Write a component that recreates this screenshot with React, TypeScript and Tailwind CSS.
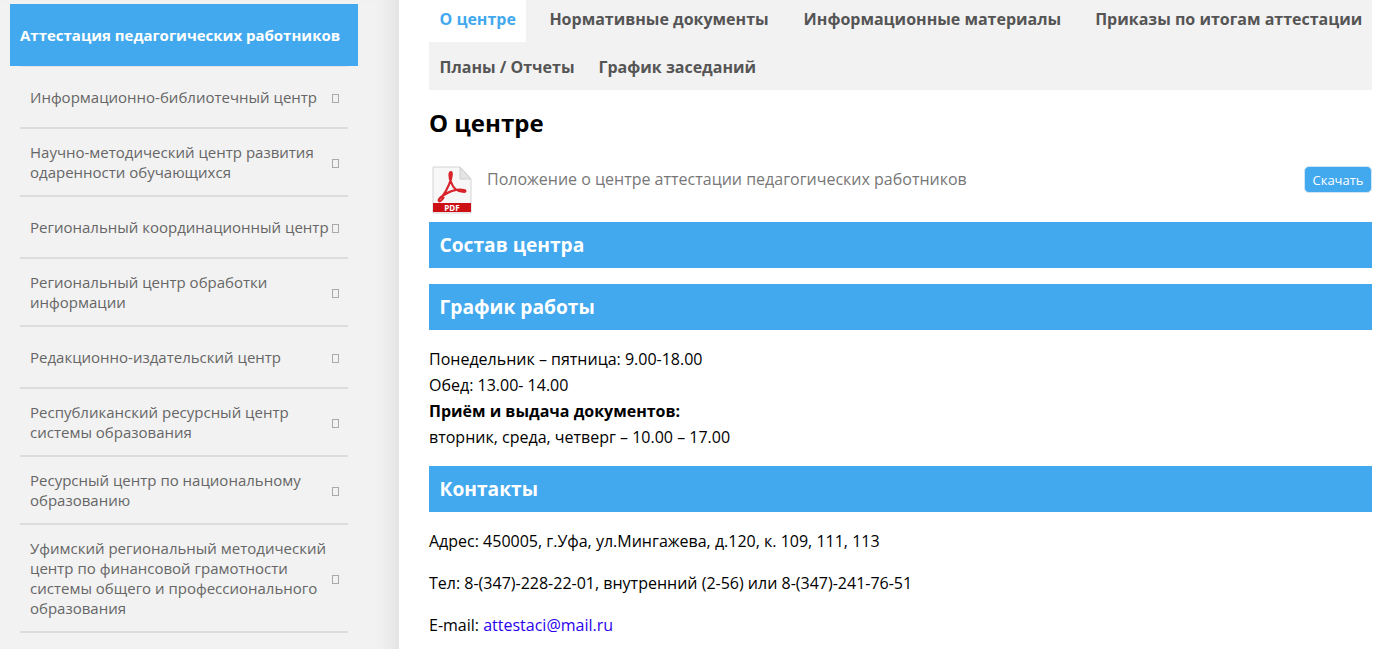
const font = { fontFamily: '"Open Sans", sans-serif' };

const sideItems = [
  "Информационно-библиотечный центр",
  "Научно-методический центр развития одаренности обучающихся",
  "Региональный координационный центр",
  "Региональный центр обработки информации",
  "Редакционно-издательский центр",
  "Республиканский ресурсный центр системы образования",
  "Ресурсный центр по национальному образованию",
  "Уфимский региональный методический центр по финансовой грамотности системы общего и профессионального образования",
];

const PdfIcon = () => (
  <svg width="42" height="50" viewBox="0 0 42 50">
    <path d="M2 1 H29 L40 13 V47 H2 Z" fill="#f7f7f7" stroke="#d4d4d4" strokeWidth="1" />
    <path d="M29 1 V13 H40 Z" fill="#e4e4e4" stroke="#cfcfcf" strokeWidth="1" />
    <path
      d="M8 33 C13 30 18 20 20 13 C21 9 21 6 20 6 C18 6 18 11 20 16 C22 22 26 26 33 26 C35 26 35 24 33 24 C27 23 19 25 13 29 C9 31 7 34 8 35 C9 36 11 34 13 31"
      fill="none"
      stroke="#d8232a"
      strokeWidth="2.2"
    />
    <rect x="2" y="37" width="38" height="9" fill="#cc1016" />
    <text x="21" y="44.5" textAnchor="middle" fontSize="8" fontWeight="700" fill="#fff">PDF</text>
  </svg>
);

const SectionBar = ({ title }: { title: string }) => (
  <div className="h-[46px] bg-[#42a9ee] pl-[10.5px] text-[19.2px] leading-[46px] font-bold text-white">{title}</div>
);

export default function App() {
  return (
    <div className="flex h-[649px] w-[1386px] overflow-hidden bg-white" style={font}>
      <aside className="w-[399px] shrink-0 bg-[#f2f2f2] pt-1 pl-[10px] shadow-[inset_-22px_0_18px_-14px_#e2e2e2]">
        <div className="flex h-[62px] w-[348px] items-center bg-[#42a9ee] pl-[10px] text-[15px] font-bold text-white">
          Аттестация педагогических работников
        </div>
        <ul className="ml-[10px] w-[328px] border-t border-[#e2e2e2]">
          {sideItems.map((item) => (
            <li
              key={item}
              className="flex min-h-[62px] items-center justify-between border-b-2 border-[#dddddd] py-[13px] pl-[10px] text-[15px] leading-5 text-[#666666]"
            >
              <span className="w-[300px]">{item}</span>
              <span className="mt-[2px] mr-[9px] h-[9px] w-[7px] shrink-0 border border-[#aaaaaa]" />
            </li>
          ))}
        </ul>
      </aside>

      <main className="ml-[30px] w-[943px] text-[16px] leading-[26px] text-black">
        <nav className="h-[90px] bg-[#f2f2f2] text-[16px] font-bold whitespace-nowrap text-[#555555]">
          <div className="flex h-[45px]">
            <a className="h-[42px] bg-white px-[10.5px] leading-[38px] text-[#42a9ee]">О центре</a>
            <a className="ml-[13px] px-[10px] leading-[38px]">Нормативные документы</a>
            <a className="ml-[15px] px-[10px] leading-[38px]">Информационные материалы</a>
            <a className="ml-[14px] px-[10px] leading-[38px]">Приказы по итогам аттестации</a>
          </div>
          <div className="flex h-[45px] gap-[3px]">
            <a className="px-[10.5px] leading-[44px]">Планы / Отчеты</a>
            <a className="px-[10.5px] leading-[44px]">График заседаний</a>
          </div>
        </nav>

        <h1 className="mt-[17px] text-[24px] leading-[32px] font-bold">О центре</h1>

        <div className="mt-[27px] flex h-[56px] items-start">
          <div className="ml-[2px] w-[56px] shrink-0">
            <PdfIcon />
          </div>
          <span className="text-[#777777]">Положение о центре аттестации педагогических работников</span>
          <button className="ml-auto h-[27px] w-[68px] rounded-[5px] border border-[#cfe5f7] bg-[#42a9ee] text-[13px] leading-[24px] text-white">
            Скачать
          </button>
        </div>

        <SectionBar title="Состав центра" />
        <div className="mt-4">
          <SectionBar title="График работы" />
        </div>

        <div className="mt-4">
          <p>Понедельник – пятница: 9.00-18.00</p>
          <p>Обед: 13.00- 14.00</p>
          <p className="font-bold">Приём и выдача документов:</p>
          <p>вторник, среда, четверг – 10.00 – 17.00</p>
        </div>

        <div className="mt-4">
          <SectionBar title="Контакты" />
        </div>

        <div className="mt-4 flex flex-col gap-4">
          <p>Адрес: 450005, г.Уфа, ул.Мингажева, д.120, к. 109, 111, 113</p>
          <p>Тел: 8-(347)-228-22-01, внутренний (2-56) или 8-(347)-241-76-51</p>
          <p>
            E-mail: <a className="text-[#2a00ee]">attestaci@mail.ru</a>
          </p>
        </div>
      </main>
    </div>
  );
}
